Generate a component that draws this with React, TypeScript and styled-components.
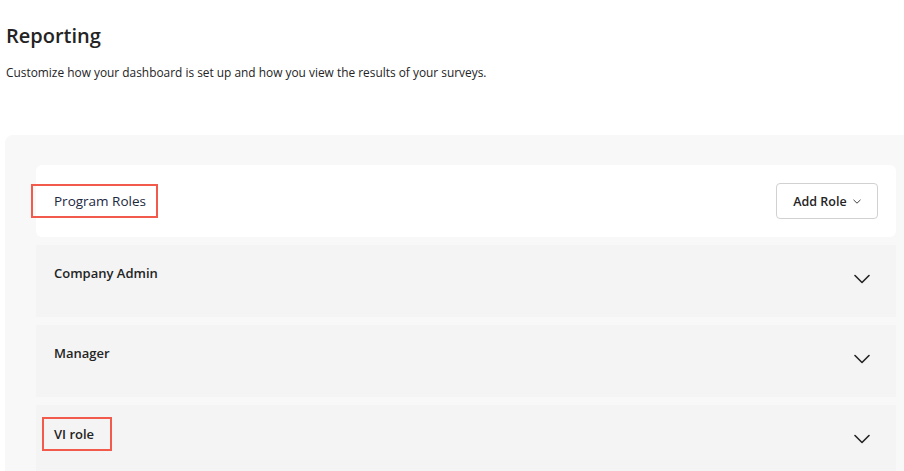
import React from 'react';
import styled, { createGlobalStyle } from 'styled-components';

const GlobalStyle = createGlobalStyle`
  html, body {
    margin: 0;
    padding: 0;
    background: #ffffff;
    font-family: "Open Sans", "Noto Sans", Arial, sans-serif;
    overflow: hidden;
  }
`;

const Page = styled.div`
  padding: 22px 0 0 5px;
`;

const Title = styled.h1`
  margin: 0 0 0 1px;
  font-size: 20px;
  line-height: 28px;
  font-weight: 600;
  color: #242424;
`;

const Subtitle = styled.p`
  margin: 14px 0 0 1px;
  font-size: 11.9px;
  line-height: 16px;
  color: #242424;
`;

const Panel = styled.div`
  margin-top: 55px;
  margin-right: -20px;
  background: #f8f8f8;
  border-radius: 8px 0 0 0;
  padding: 30px 28px 0 31px;
  display: flex;
  flex-direction: column;
  gap: 8px;
  min-height: 360px;

  & > * {
    flex-shrink: 0;
  }
`;

const HeaderCard = styled.div`
  background: #ffffff;
  border-radius: 6px;
  height: 72px;
  padding: 0 18px 0 0;
  display: flex;
  align-items: center;
  justify-content: space-between;
`;

const Highlight = styled.div<{ $left: number; $padLeft: number }>`
  margin-left: ${p => p.$left}px;
  padding: 0 ${p => p.$padLeft}px 0 ${p => p.$padLeft + 11}px;
  border: 2px solid #f25b4c;
  display: inline-flex;
  align-items: center;
  height: 30px;
`;

const HeaderLabel = styled.span`
  font-size: 13.5px;
  color: #1c2740;
`;

const AddButton = styled.button`
  height: 36px;
  width: 102px;
  border: 1px solid #d1d1d1;
  border-radius: 4px;
  background: #ffffff;
  font-family: inherit;
  font-size: 12.5px;
  font-weight: 600;
  color: #242424;
  display: flex;
  align-items: center;
  justify-content: center;
  gap: 6px;
  padding: 0;
`;

const RoleRow = styled.div`
  background: #f4f4f4;
  height: 72px;
  padding: 0 26px 0 18px;
  display: flex;
  justify-content: space-between;
  align-items: flex-start;
`;

const RoleName = styled.span<{ $boxed?: boolean }>`
  margin-top: ${p => (p.$boxed ? 12 : 19)}px;
  font-size: 13px;
  font-weight: 600;
  color: #242424;
  line-height: 18px;
  ${p =>
    p.$boxed &&
    `
    border: 2px solid #f25b4c;
    padding: 6px 16px 6px 10px;
    margin-left: -12px;
  `}
`;

const ChevronWrap = styled.div`
  margin-top: 29px;
  display: flex;
`;

const Chevron = ({ size, stroke }: { size: number; stroke: number }) => (
  <svg width={size} height={size / 2 + 2} viewBox="0 0 16 9" fill="none">
    <path d="M1 1l7 7 7-7" stroke="#242424" strokeWidth={stroke} strokeLinecap="round" strokeLinejoin="round" />
  </svg>
);

const roles = [
  { name: 'Company Admin' },
  { name: 'Manager' },
  { name: 'VI role', boxed: true },
];

export default function App() {
  return (
    <Page>
      <GlobalStyle />
      <Title>Reporting</Title>
      <Subtitle>Customize how your dashboard is set up and how you view the results of your surveys.</Subtitle>
      <Panel>
        <HeaderCard>
          <Highlight $left={-5} $padLeft={10}>
            <HeaderLabel>Program Roles</HeaderLabel>
          </Highlight>
          <AddButton>
            Add Role
            <svg width="8" height="5" viewBox="0 0 8 5" fill="none">
              <path d="M0.5 0.8l3.5 3.4 3.5-3.4" stroke="#424242" strokeWidth="1" />
            </svg>
          </AddButton>
        </HeaderCard>
        {roles.map(r => (
          <RoleRow key={r.name}>
            <RoleName $boxed={r.boxed}>{r.name}</RoleName>
            <ChevronWrap>
              <Chevron size={16} stroke={1.6} />
            </ChevronWrap>
          </RoleRow>
        ))}
      </Panel>
    </Page>
  );
}
